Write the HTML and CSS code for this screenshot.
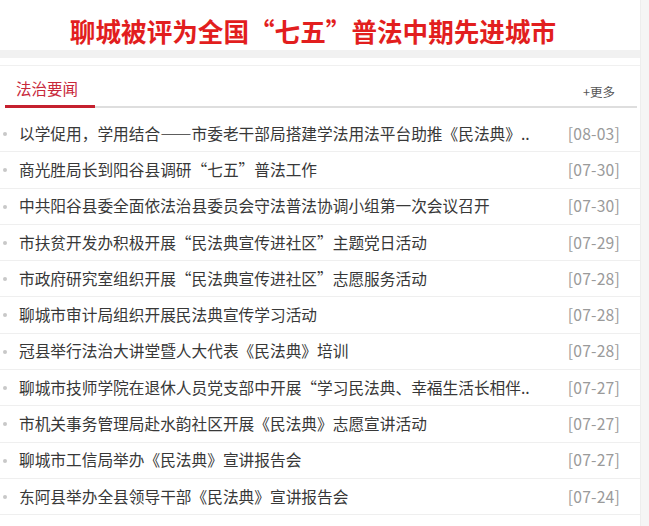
FILE: index.html
```html
<!DOCTYPE html>
<html lang="zh-CN">
<head>
<meta charset="utf-8">
<link rel="stylesheet" href="styles.css">
</head>
<body>
<div class="page">
  <div class="main">
    <h1 class="headline">聊城被评为全国“七五”普法中期先进城市</h1>
    <div class="band"></div>
    <div class="thin"></div>
    <div class="section-head">
      <span class="section-title">法治要闻</span>
      <a class="more">+更多</a>
    </div>
    <ul class="news">
      <li><span class="t">以学促用，学用结合——市委老干部局搭建学法用法平台助推《民法典》..</span><span class="d">[08-03]</span></li>
      <li><span class="t">商光胜局长到阳谷县调研“七五”普法工作</span><span class="d">[07-30]</span></li>
      <li><span class="t">中共阳谷县委全面依法治县委员会守法普法协调小组第一次会议召开</span><span class="d">[07-30]</span></li>
      <li><span class="t">市扶贫开发办积极开展“民法典宣传进社区”主题党日活动</span><span class="d">[07-29]</span></li>
      <li><span class="t">市政府研究室组织开展“民法典宣传进社区”志愿服务活动</span><span class="d">[07-28]</span></li>
      <li><span class="t">聊城市审计局组织开展民法典宣传学习活动</span><span class="d">[07-28]</span></li>
      <li><span class="t">冠县举行法治大讲堂暨人大代表《民法典》培训</span><span class="d">[07-28]</span></li>
      <li><span class="t">聊城市技师学院在退休人员党支部中开展“学习民法典、幸福生活长相伴..</span><span class="d">[07-27]</span></li>
      <li><span class="t">市机关事务管理局赴水韵社区开展《民法典》志愿宣讲活动</span><span class="d">[07-27]</span></li>
      <li><span class="t">聊城市工信局举办《民法典》宣讲报告会</span><span class="d">[07-27]</span></li>
      <li><span class="t">东阿县举办全县领导干部《民法典》宣讲报告会</span><span class="d">[07-24]</span></li>
    </ul>
  </div>
  <div class="side"></div>
</div>
</body>
</html>
```
FILE: styles.css
```css
html, body {
  margin: 0;
  padding: 0;
  background: #fff;
}
body {
  font-family: "Noto Sans CJK SC", "Noto Sans", sans-serif;
  width: 649px;
  height: 526px;
  overflow: hidden;
}
.page {
  display: flex;
  height: 526px;
}
.main {
  width: 640px;
  flex: none;
}
.side {
  flex: 1;
  background: #f5f5f5;
  border-left: 1px solid #ededed;
}
.headline {
  margin: 0;
  height: 50px;
  line-height: 62px;
  text-align: center;
  font-size: 25.6px;
  font-weight: 700;
  color: #e21e1e;
  padding-right: 14px;
  box-sizing: border-box;
}
.band {
  height: 8px;
  background: #f1f1f1;
}
.thin {
  height: 7px;
  border-bottom: 1px solid #f0f0f0;
}
.section-head {
  margin: 0 3px 0 5px;
  height: 40px;
  display: flex;
  justify-content: space-between;
  align-items: flex-end;
  border-bottom: 2px solid #dedede;
}
.section-title {
  font-size: 15.5px;
  color: #c8283a;
  padding: 0 0 0 11px;
  line-height: 20px;
  height: 30px;
  border-bottom: 3px solid #c5202e;
  margin-bottom: -2px;
  box-sizing: border-box;
  width: 90px;
}
.more {
  font-size: 12.5px;
  color: #555;
  line-height: 16px;
  margin-bottom: 6px;
  margin-right: 22px;
}
.news {
  list-style: none;
  margin: 8px 0 0 0;
  padding: 0;
}
.news li {
  height: 36.3px;
  box-sizing: border-box;
  border-bottom: 1px solid #efefef;
  display: flex;
  align-items: center;
  justify-content: space-between;
  position: relative;
  padding: 0 20px 0 19px;
  font-size: 15.7px;
  line-height: 20px;
}
.news li::before {
  content: "";
  position: absolute;
  left: 3px;
  top: 16px;
  width: 4px;
  height: 4px;
  border-radius: 50%;
  background: #c8c8c8;
}
.t {
  color: #383838;
  white-space: nowrap;
}
.d {
  color: #9a9a9a;
  white-space: nowrap;
  letter-spacing: 0.2px;
}
```
